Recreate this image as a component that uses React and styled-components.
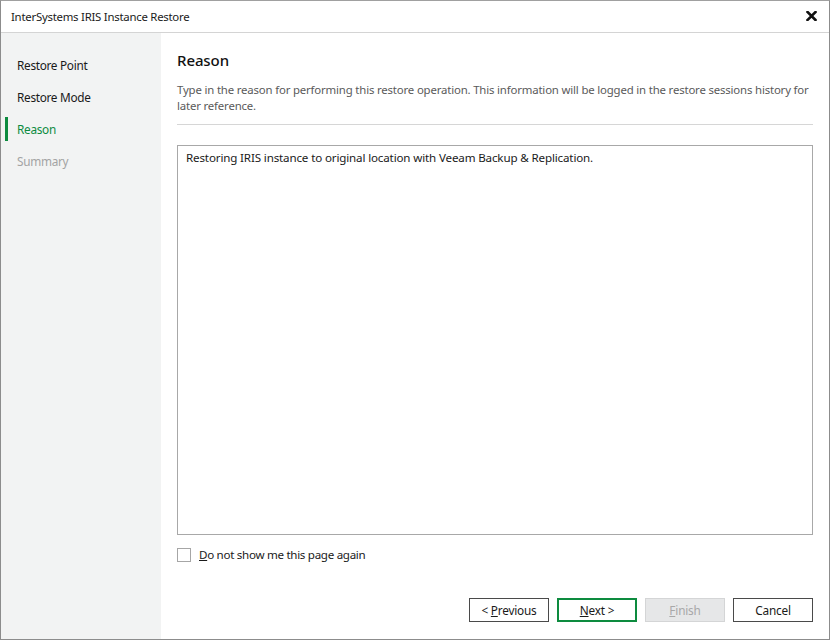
import React from "react";
import styled, { createGlobalStyle } from "styled-components";

const GlobalStyle = createGlobalStyle`
  html, body {
    margin: 0;
    padding: 0;
    background: #ffffff;
  }
  body {
    font-family: "Noto Sans", "Open Sans", Arial, sans-serif;
    font-size: 12px;
    color: #1a1a1a;
  }
`;

const steps = [
  { label: "Restore Point", state: "done" },
  { label: "Restore Mode", state: "done" },
  { label: "Reason", state: "active" },
  { label: "Summary", state: "pending" },
];

export default function App() {
  return (
    <>
      <GlobalStyle />
      <Window>
        <TitleBar>
          <Title>InterSystems IRIS Instance Restore</Title>
          <CloseButton aria-label="Close">
            <svg width="11" height="10" viewBox="0 0 11 10">
              <path
                d="M1.5 1 L9.5 9 M9.5 1 L1.5 9"
                stroke="#111"
                strokeWidth="2.6"
                strokeLinecap="square"
              />
            </svg>
          </CloseButton>
        </TitleBar>

        <Body>
          <Sidebar>
            {steps.map((s) => (
              <StepItem key={s.label} $state={s.state}>
                {s.label}
              </StepItem>
            ))}
          </Sidebar>

          <Main>
            <Heading>Reason</Heading>
            <Description>
              Type in the reason for performing this restore operation. This
              information will be logged in the restore sessions history for
              later reference.
            </Description>
            <Divider />

            <ReasonBox
              defaultValue="Restoring IRIS instance to original location with Veeam Backup & Replication."
            />

            <CheckRow>
              <CheckBox type="checkbox" />
              <span>
                <u>D</u>o not show me this page again
              </span>
            </CheckRow>

            <Footer>
              <WizardButton>
                &lt; <u>P</u>revious
              </WizardButton>
              <WizardButton $primary>
                <u>N</u>ext &gt;
              </WizardButton>
              <WizardButton disabled>
                <u>F</u>inish
              </WizardButton>
              <WizardButton>Cancel</WizardButton>
            </Footer>
          </Main>
        </Body>
      </Window>
    </>
  );
}

const Window = styled.div`
  width: 830px;
  height: 640px;
  box-sizing: border-box;
  border: 1px solid #8c8c8c;
  border-top: 1px solid #a0a0a0;
  display: flex;
  flex-direction: column;
  background: #ffffff;
  overflow: hidden;
`;

const TitleBar = styled.div`
  height: 32px;
  flex-shrink: 0;
  display: flex;
  align-items: center;
  justify-content: space-between;
  padding: 0 10px 1px 10px;
  box-sizing: border-box;
  border-bottom: 1px solid #d4d4d4;
`;

const Title = styled.div`
  font-size: 11.4px;
  color: #1a1a1a;
  letter-spacing: -0.25px;
`;

const CloseButton = styled.div`
  display: flex;
  align-items: center;
  justify-content: center;
  width: 16px;
  height: 16px;
`;

const Body = styled.div`
  flex: 1;
  display: flex;
  min-height: 0;
`;

const Sidebar = styled.div`
  width: 160px;
  flex-shrink: 0;
  background: #f2f3f3;
  padding-top: 16px;
  display: flex;
  flex-direction: column;
`;

const StepItem = styled.div`
  position: relative;
  height: 32px;
  display: flex;
  align-items: center;
  padding-left: 16px;
  font-size: 11.8px;
  letter-spacing: -0.3px;
  color: ${(p) =>
    p.$state === "active"
      ? "#0d8b3f"
      : p.$state === "pending"
      ? "#a3a3a3"
      : "#1a1a1a"};

  &::before {
    content: "";
    display: ${(p) => (p.$state === "active" ? "block" : "none")};
    position: absolute;
    left: 4px;
    top: 4px;
    bottom: 4px;
    width: 3px;
    background: #0d8b3f;
  }
`;

const Main = styled.div`
  flex: 1;
  display: flex;
  flex-direction: column;
  padding: 16px 16px 17px 16px;
  min-width: 0;
`;

const Heading = styled.div`
  font-size: 15px;
  font-weight: 500;
  color: #111;
  line-height: 22px;
  letter-spacing: -0.1px;
`;

const Description = styled.div`
  margin-top: 11px;
  font-size: 11.4px;
  line-height: 16px;
  color: #5a5a5a;
  letter-spacing: -0.17px;
`;

const Divider = styled.div`
  margin-top: 10px;
  height: 1px;
  background: #d6d6d6;
`;

const ReasonBox = styled.textarea`
  margin-top: 20px;
  height: 390px;
  box-sizing: border-box;
  border: 1px solid #a8a8a8;
  padding: 4px 8px;
  resize: none;
  font-family: "Noto Sans", "Open Sans", Arial, sans-serif;
  font-size: 11.6px;
  line-height: 16px;
  letter-spacing: -0.15px;
  color: #1a1a1a;
  outline: none;
`;

const CheckRow = styled.label`
  margin-top: 12px;
  display: flex;
  align-items: center;
  gap: 8px;
  font-size: 11.6px;
  letter-spacing: -0.3px;
  color: #1a1a1a;
`;

const CheckBox = styled.input`
  appearance: none;
  margin: 0;
  width: 14px;
  height: 14px;
  box-sizing: border-box;
  border: 1px solid #a6a6a6;
  background: #fff;
`;

const Footer = styled.div`
  margin-top: auto;
  display: flex;
  justify-content: flex-end;
  gap: 8px;
`;

const WizardButton = styled.button`
  width: 80px;
  height: 24px;
  box-sizing: border-box;
  background: ${(p) => (p.disabled ? "#e6e7e8" : "#ffffff")};
  border: ${(p) =>
    p.$primary
      ? "2px solid #0d8b3f"
      : p.disabled
      ? "1px solid #d4d5d6"
      : "1px solid #4a4a4a"};
  color: ${(p) => (p.disabled ? "#a8a8a8" : "#1a1a1a")};
  font-family: "Noto Sans", "Open Sans", Arial, sans-serif;
  font-size: 11.8px;
  letter-spacing: -0.2px;
  padding: 0;
  text-align: center;
  white-space: pre;
`;
